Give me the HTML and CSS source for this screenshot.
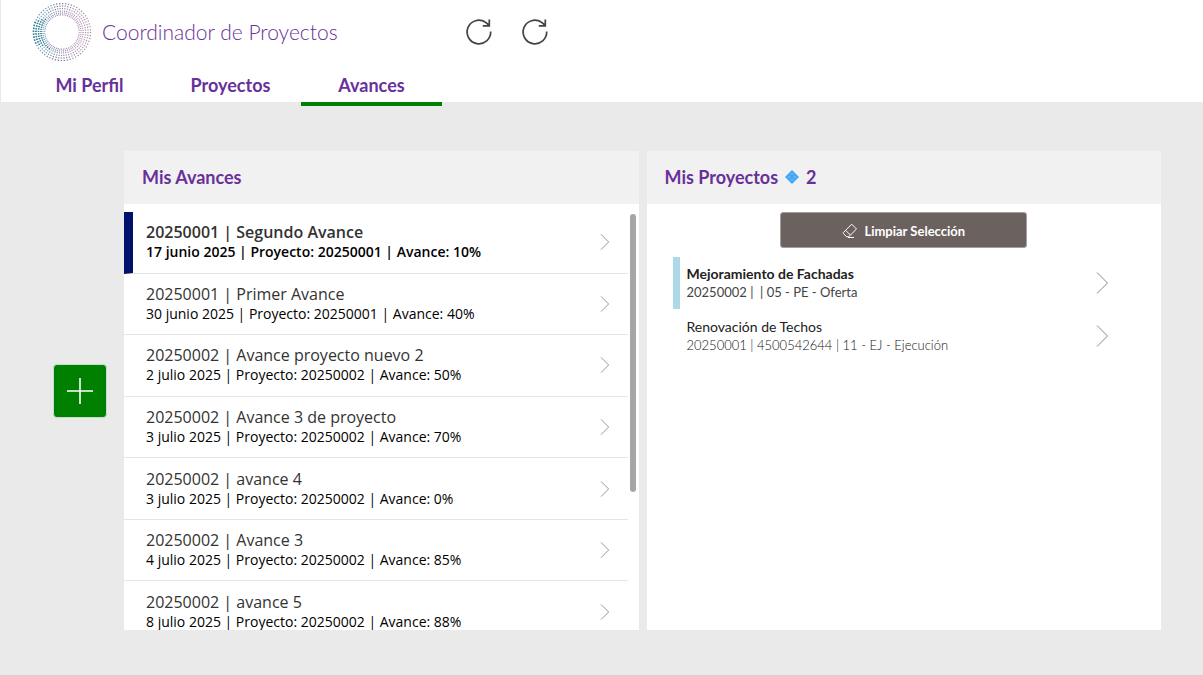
FILE: index.html
```html
<!DOCTYPE html>
<html lang="es">
<head>
<meta charset="utf-8">
<meta name="viewport" content="width=device-width, initial-scale=1">
<title>Coordinador de Proyectos</title>
<link rel="stylesheet" href="styles.css">
</head>
<body>
<svg class="defs" width="0" height="0" aria-hidden="true">
  <symbol id="refresh" viewBox="0 0 28 28"><path d="M25.700 13.500A11.800 11.800 0 1 1 20.500 4.200Q22.800 5.600 23.900 7.500M24.300 1.500V7.800H17.800" fill="none" stroke="currentColor" stroke-width="1.700"/></symbol>
  <symbol id="chevron" viewBox="0 0 12 22"><path d="M.5.500 11 11 .5 21.500" fill="none" stroke="currentColor" stroke-width="1" vector-effect="non-scaling-stroke"/></symbol>
</svg>
<header class="header">
  <div class="brand">
    <svg class="logo" viewBox="0 0 60 60" aria-hidden="true">
      <defs>
        <linearGradient id="tone" gradientUnits="userSpaceOnUse" x1="1" y1="30" x2="59" y2="30">
          <stop offset="0" stop-color="#2e8295"/><stop offset=".2" stop-color="#3f7f9a"/><stop offset=".42" stop-color="#555280"/><stop offset=".7" stop-color="#8d6a98"/><stop offset="1" stop-color="#a5708a"/>
        </linearGradient>
      </defs>
      <g fill="none" stroke="url(#tone)" stroke-dasharray=".45 .55" stroke-width="1.200">
        <g opacity=".8">
          <circle cx="30" cy="30" r="28.500" pathLength="60"/><circle cx="30" cy="30" r="26" pathLength="60"/><circle cx="30" cy="30" r="23.500" pathLength="60"/><circle cx="30" cy="30" r="21" pathLength="60"/><circle cx="30" cy="30" r="19" pathLength="60"/><circle cx="30" cy="30" r="17.200" pathLength="60"/>
        </g>
        <g stroke-width="1.600">
          <circle cx="30" cy="30" r="28.500" pathLength="60" stroke-dasharray="0 26 .5 .5 .5 .5 .5 .5 .5 .5 .5 .5 .5 .5 .5 .5 .5 60"/>
          <circle cx="30" cy="30" r="26" pathLength="60" stroke-dasharray="0 25 .5 .5 .5 .5 .5 .5 .5 .5 .5 .5 .5 .5 .5 .5 .5 .5 .5 .5 .5 60"/>
          <circle cx="30" cy="30" r="23.500" pathLength="60" stroke-dasharray="0 24 .5 .5 .5 .5 .5 .5 .5 .5 .5 .5 .5 .5 .5 .5 .5 .5 .5 .5 .5 .5 .5 .5 .5 60"/>
          <circle cx="30" cy="30" r="21" pathLength="60" stroke-dasharray="0 21 .5 .5 .5 .5 .5 .5 .5 .5 .5 .5 .5 .5 .5 .5 .5 .5 .5 .5 .5 .5 .5 .5 .5 .5 .5 .5 .5 .5 .5 .5 .5 60"/>
        </g>
      </g>
    </svg>
    <h1 class="title">Coordinador de Proyectos</h1>
    <div class="actions">
      <button class="icon-button" aria-label="Actualizar avances"><svg width="28" height="28"><use href="#refresh"/></svg></button>
      <button class="icon-button" aria-label="Actualizar proyectos"><svg width="28" height="28"><use href="#refresh"/></svg></button>
    </div>
  </div>
  <nav class="tabs">
    <a class="tab" href="#perfil">Mi Perfil</a>
    <a class="tab" href="#proyectos">Proyectos</a>
    <a class="tab tab-active" href="#avances" aria-current="page">Avances</a>
  </nav>
</header>
<main class="main">
  <button class="add" aria-label="Agregar avance"><svg width="28" height="28" viewBox="0 0 28 28"><path d="M14 1v26M1 14h26" stroke="#fff" stroke-width="1.600"/></svg></button>
  <section class="panel">
    <h2 class="panel-title">Mis Avances</h2>
    <div class="scroller">
      <ul class="entries">
        <li class="entry entry-selected"><div class="entry-text"><span class="entry-name">20250001 | Segundo Avance</span><span class="entry-meta">17 junio 2025 | Proyecto: 20250001 | Avance: 10%</span></div><svg class="chevron"><use href="#chevron"/></svg></li>
        <li class="entry"><div class="entry-text"><span class="entry-name">20250001 | Primer Avance</span><span class="entry-meta">30 junio 2025 | Proyecto: 20250001 | Avance: 40%</span></div><svg class="chevron"><use href="#chevron"/></svg></li>
        <li class="entry"><div class="entry-text"><span class="entry-name">20250002 | Avance proyecto nuevo 2</span><span class="entry-meta">2 julio 2025 | Proyecto: 20250002 | Avance: 50%</span></div><svg class="chevron"><use href="#chevron"/></svg></li>
        <li class="entry"><div class="entry-text"><span class="entry-name">20250002 | Avance 3 de proyecto</span><span class="entry-meta">3 julio 2025 | Proyecto: 20250002 | Avance: 70%</span></div><svg class="chevron"><use href="#chevron"/></svg></li>
        <li class="entry"><div class="entry-text"><span class="entry-name">20250002 | avance 4</span><span class="entry-meta">3 julio 2025 | Proyecto: 20250002 | Avance: 0%</span></div><svg class="chevron"><use href="#chevron"/></svg></li>
        <li class="entry"><div class="entry-text"><span class="entry-name">20250002 | Avance 3</span><span class="entry-meta">4 julio 2025 | Proyecto: 20250002 | Avance: 85%</span></div><svg class="chevron"><use href="#chevron"/></svg></li>
        <li class="entry"><div class="entry-text"><span class="entry-name">20250002 | avance 5</span><span class="entry-meta">8 julio 2025 | Proyecto: 20250002 | Avance: 88%</span></div><svg class="chevron"><use href="#chevron"/></svg></li>
      </ul>
      <div class="track"><div class="thumb"></div></div>
    </div>
  </section>
  <section class="panel">
    <h2 class="panel-title">Mis Proyectos <svg class="diamond" viewBox="0 0 14 14"><path d="M7 0 14 7 7 14 0 7Z" fill="#45a6f5"/><path d="M7 2.500 8.500 4 7 5.500 5.500 4ZM7 8.500 8.500 10 7 11.500 5.500 10ZM4 5.500 5.500 7 4 8.500 2.500 7ZM10 5.500 11.500 7 10 8.500 8.500 7Z" fill="#64b8fa"/></svg> 2</h2>
    <div class="projects">
      <button class="clear"><svg width="16" height="16" viewBox="0 0 16 16" fill="none" stroke="currentColor"><path d="M9.700 1.200 14.500 6 6.800 13.700H4.500L1.300 10.500V9.600ZM3.600 7.300 8.400 12.100M6 14.500h6"/></svg>Limpiar Selección</button>
      <ul class="project-list">
        <li class="project project-selected"><div class="project-text"><span class="project-name">Mejoramiento de Fachadas</span><span class="project-meta">20250002 |&nbsp; | 05 - PE - Oferta</span></div><svg class="chevron chevron-large"><use href="#chevron"/></svg></li>
        <li class="project"><div class="project-text"><span class="project-name">Renovación de Techos</span><span class="project-meta">20250001 | 4500542644 | 11 - EJ - Ejecución</span></div><svg class="chevron chevron-large"><use href="#chevron"/></svg></li>
      </ul>
    </div>
  </section>
</main>
</body>
</html>
```
FILE: styles.css
```css
* { box-sizing: border-box; }
body { margin: 0; min-height: 100vh; display: flex; flex-direction: column; background: #eaeaea; font-family: Lato, "Liberation Sans", sans-serif; color: #333; }
button { border: 0; padding: 0; font: inherit; cursor: pointer; }
ul { list-style: none; margin: 0; padding: 0; }
svg { display: block; flex: none; }
.defs { position: absolute; }

.header { background: #fff; border-left: 1px solid #eaeaea; height: 102px; }
.brand { display: flex; align-items: center; height: 63px; padding-left: 31px; }
.logo { width: 60px; height: 60px; }
.title { margin: 0 0 0 10px; font-size: 21px; line-height: 28px; font-weight: 300; color: #68309a; white-space: nowrap; }
.actions { display: flex; gap: 28px; margin-left: 127px; }
.icon-button { background: none; color: #444; }
.tabs { display: flex; padding-left: 18px; }
.tab { width: 141px; height: 43px; padding-top: 10px; border-bottom: 4px solid transparent; text-align: center; font-size: 18px; line-height: 24px; font-weight: 700; color: #68309a; text-decoration: none; }
.tab-active { border-color: #008000; }

.main { flex: 1; display: flex; gap: 8px; padding: 49px 42px 45px 53px; border-bottom: 1px solid #d2d2d2; }
.add { align-self: center; display: grid; place-items: center; width: 54px; height: 54px; margin-right: 9px; border: 1px solid #c5dfc5; border-radius: 4px; background: #008000; }
.panel { flex: 1; min-width: 0; display: flex; flex-direction: column; background: #fff; }
.panel-title { display: flex; align-items: center; gap: 7px; margin: 0; height: 53px; padding: 0 18px 2px; background: #f1f1f1; font-size: 18px; line-height: 24px; font-weight: 700; color: #68309a; }
.diamond { width: 14px; height: 14px; }

.scroller { display: flex; height: 426px; padding-top: 8px; overflow: hidden; }
.entries { flex: 1; display: grid; grid-auto-rows: 1fr; height: 431px; font-family: "Open Sans", "Noto Sans", sans-serif; }
.entry { display: flex; align-items: center; padding: 0 18px 0 22px; border-bottom: 1px solid #e2e6e6; }
.entry-selected { border-left: 9px solid #00126b; padding-left: 13px; }
.entry-text { flex: 1; display: grid; }
.entry-name { font-size: 16px; line-height: 20px; color: #333; }
.entry-meta { font-size: 14px; line-height: 20px; color: #000; }
.entry-selected .entry-name, .entry-selected .entry-meta { font-weight: 600; }
.chevron { width: 10px; height: 16px; color: #999; }
.track { width: 11px; padding: 2px 3px 0 2px; }
.thumb { width: 6px; height: 278px; border-radius: 3px; background: #a6a6a6; }

.projects { display: flex; flex-direction: column; padding: 8px 52px 0 26px; }
.clear { align-self: center; display: flex; align-items: center; justify-content: center; gap: 6px; width: 247px; height: 36px; margin-left: 26px; padding-top: 2px; border: 1px solid #a5a09f; border-radius: 3px; background: #6b6260; color: #fff; font-size: 13px; font-weight: 700; }
.project-list { display: grid; gap: 1px; margin-top: 9px; }
.project { display: flex; align-items: center; height: 52px; padding-left: 14px; }
.project-selected { border-left: 7px solid #add8e6; padding-left: 7px; }
.project-text { flex: 1; display: grid; }
.project-name { font-size: 14px; line-height: 18px; color: #222; }
.project-selected .project-name { font-weight: 700; }
.project-meta { font-size: 13px; line-height: 19px; font-weight: 300; color: #111; }
.project-selected .project-meta { font-weight: 400; color: #444; }
.chevron-large { width: 13px; height: 22px; color: #888; }
```
